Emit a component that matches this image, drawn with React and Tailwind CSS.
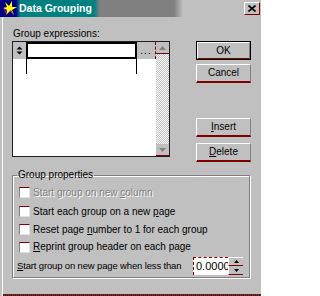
import React from "react";

const raised =
  "border-t border-l border-t-white border-l-white border-r border-r-[#808080] border-b-2 border-b-[#800000]";

function Button({ children, isDefault }) {
  if (isDefault) {
    return (
      <div className="h-[19px] w-full border border-black">
        <div className="flex h-full w-full items-center justify-center border-t border-l border-t-white border-l-white border-r border-b border-r-[#808080] border-b-[#800000]">
          {children}
        </div>
      </div>
    );
  }

  return (
    <div className={`flex h-[19px] w-full items-center justify-center ${raised}`}>
      {children}
    </div>
  );
}

function Checkbox({ children, disabled, height }) {
  return (
    <div className={`flex items-center gap-[3px] pl-[6px] ${height}`}>
      <div className="h-[11px] w-[11px] shrink-0 border-t border-l border-t-[#800000] border-l-[#808080] border-r border-b border-r-[#dfdfdf] border-b-[#dfdfdf] bg-white" />
      <span
        className={
          disabled
            ? "whitespace-nowrap text-[#808080] [text-shadow:1px_1px_0_#fff]"
            : "whitespace-nowrap text-black"
        }
      >
        {children}
      </span>
    </div>
  );
}

function TitleIcon() {
  return (
    <svg width="15" height="15" viewBox="0 0 15 15">
      <polygon
        points="2,1 6,5 9,0 9,6 14,6 9,9 11,14 7,10 3,14 4,9 0,7 4,6"
        fill="#ffff00"
      />
      <polygon points="3,14 4,9 0,7 2,11" fill="#a000a0" />
      <polygon points="7,10 11,14 8,9" fill="#a000a0" />
    </svg>
  );
}

export default function App() {
  return (
    <div className="flex h-[296px] w-[261px] flex-col overflow-hidden bg-[#c0c0c0] font-['Liberation_Sans',Arial,sans-serif] text-[10px] leading-none text-black">
      <div className="flex h-[17px] shrink-0 items-center bg-[linear-gradient(90deg,#000080_0px,#000080_16px,#008080_20px,#008080_94px,#808080_100px,#808080_174px,#c0c0c0_183px)] pl-[3px] pr-[1px]">
        <TitleIcon />
        <span className="ml-[1px] text-[10.5px] font-bold text-white">
          Data Grouping
        </span>
        <div className="ml-auto flex h-[13px] w-[16px] items-center justify-center border-t border-l border-t-white border-l-white border-r border-b border-r-[#800000] border-b-[#800000]">
          <svg width="8" height="7" viewBox="0 0 8 7">
            <path d="M0.5 0.5 L7.5 6.5 M7.5 0.5 L0.5 6.5" stroke="#000" strokeWidth="1.6" />
          </svg>
        </div>
      </div>

      <div className="ml-[2px] flex flex-1 flex-col border-l border-white">
        <div className="flex">
          <div className="ml-[9px] flex w-[158px] flex-col pt-[10px]">
            <div className="h-[14px] pl-[1px] leading-[14px]">
              Group expressions:
            </div>
            <div className="flex h-[116px] border border-[#202020] bg-white">
              <div className="flex w-[143px] flex-col">
                <div className="flex h-[17px]">
                  <div className="flex w-[13px] items-center justify-center border-b border-[#c0c0c0] bg-[#c0c0c0]">
                    <svg width="7" height="9" viewBox="0 0 7 9">
                      <path d="M3.5 0.5 L6.5 3.5 L0.5 3.5 Z M0.5 5.5 L6.5 5.5 L3.5 8.5 Z" fill="#000" />
                    </svg>
                  </div>
                  <div className="w-[111px] border-2 border-black bg-white" />
                  <div className="flex w-[19px] items-end justify-center border-r border-dashed border-r-[#800000] bg-[#c0c0c0] pb-[3px] tracking-[1px]">
                    ...
                  </div>
                </div>
                <div className="flex h-[15px]">
                  <div className="w-[13px]" />
                  <div className="w-[111px] border-l border-r border-black" />
                </div>
              </div>
              <div className="ml-auto flex w-[13px] flex-col bg-[repeating-conic-gradient(#c0c0c0_0_25%,#ffffff_0_50%)] bg-[length:2px_2px]">
                <div className="flex h-[12px] items-center justify-center border-b border-[#800000] bg-[#c0c0c0]">
                  <svg width="7" height="4" viewBox="0 0 7 4">
                    <path d="M3.5 0 L7 4 L0 4 Z" fill="#808080" />
                  </svg>
                </div>
                <div className="mt-auto flex h-[12px] items-center justify-center border-b border-[#800000] bg-[#c0c0c0]">
                  <svg width="7" height="4" viewBox="0 0 7 4">
                    <path d="M0 0 L7 0 L3.5 4 Z" fill="#808080" />
                  </svg>
                </div>
              </div>
            </div>
          </div>

          <div className="ml-[26px] flex w-[55px] flex-col pt-[24px]">
            <Button isDefault>OK</Button>
            <div className="mt-[4px]">
              <Button>Cancel</Button>
            </div>
            <div className="mt-[35px]">
              <Button>
                <span>
                  <span className="underline">I</span>nsert
                </span>
              </Button>
            </div>
            <div className="mt-[6px]">
              <Button>
                <span>
                  <span className="underline">D</span>elete
                </span>
              </Button>
            </div>
          </div>
        </div>

        <fieldset className="ml-[9px] mt-[7px] h-[109px] w-[238px] border border-[#808080] pb-[1px] shadow-[inset_1px_1px_0_#fff,1px_1px_0_#fff]">
          <legend className="ml-[4px] h-[12px] px-[1px] leading-[12px]">
            Group properties
          </legend>
          <div className="flex flex-col pt-[2px]">
            <Checkbox disabled height="h-[19px]">
              Start group on new <span className="underline">c</span>olumn
            </Checkbox>
            <Checkbox height="h-[19px]">
              Start each group on a new <span className="underline">p</span>age
            </Checkbox>
            <Checkbox height="h-[17px]">
              Reset page <span className="underline">n</span>umber to 1 for each group
            </Checkbox>
            <Checkbox height="h-[18px]">
              <span className="underline">R</span>eprint group header on each page
            </Checkbox>
            <div className="flex h-[20px] items-center pl-[4px] pr-[6px]">
              <span className="whitespace-nowrap text-[9.5px] tracking-[-0.15px]">
                <span className="underline">S</span>tart group on new page when less than
              </span>
              <div className="ml-auto flex h-[18px] w-[50px] shrink-0">
                <div className="flex w-[35px] items-center overflow-hidden whitespace-nowrap border-t border-l border-dashed border-t-[#800000] border-l-[#800000] bg-white pl-[2px] text-[11px]">
                  0.0000
                </div>
                <div className="flex w-[15px] flex-col">
                  <div className="flex h-[9px] items-center justify-center border-t border-l border-t-white border-l-white border-b border-b-[#800000] bg-[#c0c0c0]">
                    <svg width="5" height="3" viewBox="0 0 5 3">
                      <path d="M2.5 0 L5 3 L0 3 Z" fill="#000" />
                    </svg>
                  </div>
                  <div className="flex h-[9px] items-center justify-center border-l border-l-white border-b border-b-[#800000] bg-[#c0c0c0]">
                    <svg width="5" height="3" viewBox="0 0 5 3">
                      <path d="M0 0 L5 0 L2.5 3 Z" fill="#000" />
                    </svg>
                  </div>
                </div>
              </div>
            </div>
          </div>
        </fieldset>

        <div className="mt-auto h-[2px] bg-[repeating-linear-gradient(90deg,#800000_0_1px,#404040_1px_2px)]" />
      </div>
    </div>
  );
}
